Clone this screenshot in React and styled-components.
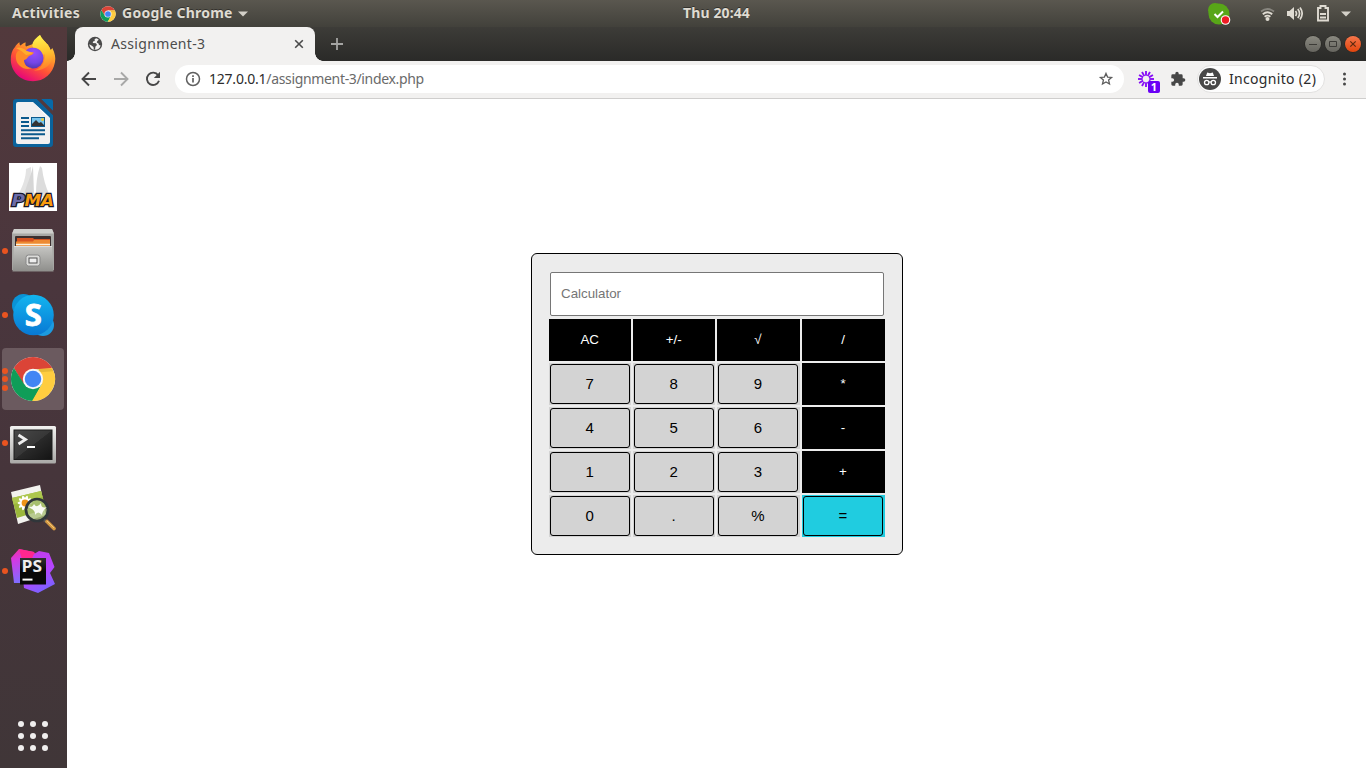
import React from "react";
import styled, { createGlobalStyle } from "styled-components";

const GlobalStyle = createGlobalStyle`
  * { box-sizing: border-box; }
  body { margin: 0; background: #fff; overflow: hidden; font-family: "Noto Sans", "Open Sans", sans-serif; }
  svg { display: block; flex: none; }
`;

const Desktop = styled.div`
  width: 1366px;
  height: 768px;
  display: flex;
  flex-direction: column;
`;

const TopBar = styled.header`
  height: 27px;
  flex: none;
  display: grid;
  grid-template-columns: 671px 79px 1fr;
  align-items: center;
  padding: 0 15px 0 12px;
  background: linear-gradient(#5a574f, #42413b);
  color: #dfdbd2;
  font-size: 14px;
  line-height: 24px;
  font-weight: 700;
  text-shadow: 0 -1px 0 rgba(0, 0, 0, 0.4);
`;

const BarGroup = styled.div`
  display: flex;
  align-items: center;
  justify-content: ${(p) => (p.$end ? "flex-end" : "flex-start")};
`;

const BarLabel = styled.span`
  width: ${(p) => p.$w}px;
  padding-bottom: 1px;
  letter-spacing: ${(p) => p.$ls || 0}px;
  white-space: nowrap;
`;

const Gap = styled.span`
  width: ${(p) => p.$w}px;
  flex: none;
`;

const Workspace = styled.div`
  flex: 1;
  display: flex;
  min-height: 0;
`;

const Dock = styled.nav`
  width: 67px;
  flex: none;
  display: flex;
  flex-direction: column;
  align-items: center;
  background: linear-gradient(#52393c, #4a363d 35%, #46353b 60%, #403638);
`;

const DockItem = styled.div`
  width: 62px;
  height: 62px;
  margin: 1px 3px 1px 2px;
  flex: none;
  display: flex;
  align-items: center;
  justify-content: center;
  position: relative;
  border-radius: 4px;
  background: ${(p) => (p.$active ? "#6b5a5f" : "transparent")};
`;

const RunningDots = styled.span`
  position: absolute;
  left: -0.3px;
  top: 0;
  height: 62px;
  display: flex;
  flex-direction: column;
  justify-content: center;
  gap: 2.5px;
`;

const Dot = styled.i`
  width: 6px;
  height: 6px;
  border-radius: 50%;
  background: #e95420;
`;

const AppsButton = styled.div`
  margin-top: auto;
  margin-right: 2px;
  height: 64px;
  display: grid;
  grid-template-columns: repeat(3, 6px);
  gap: 6px;
  align-content: center;
`;

const AppsDot = styled.i`
  width: 6px;
  height: 6px;
  border-radius: 50%;
  background: #f0eeee;
`;

const Browser = styled.main`
  flex: 1;
  display: flex;
  flex-direction: column;
  min-width: 0;
`;

const TabStrip = styled.div`
  height: 34px;
  flex: none;
  display: flex;
  align-items: center;
  padding: 0 5px 0 8px;
  background: linear-gradient(#3d3c38, #2a2a28);
`;

const Tab = styled.div`
  width: 240px;
  height: 34px;
  display: flex;
  align-items: center;
  padding: 0 11px 0 12px;
  background: #f2f1f0;
  border-radius: 8px 8px 0 0;
  position: relative;
  color: #4c4c4c;
  font-size: 14px;
  &::before, &::after {
    content: "";
    position: absolute;
    bottom: 0;
    width: 8px;
    height: 8px;
  }
  &::before {
    left: -8px;
    background: radial-gradient(circle at 0 0, transparent 7.5px, #f2f1f0 8px);
  }
  &::after {
    right: -8px;
    background: radial-gradient(circle at 100% 0, transparent 7.5px, #f2f1f0 8px);
  }
`;

const TabTitle = styled.span`
  flex: 1;
  margin-left: 8px;
  padding-bottom: 2px;
  letter-spacing: 0.33px;
`;

const WindowControls = styled.div`
  margin-left: auto;
  display: flex;
  gap: 4px;
`;

const WindowButton = styled.div`
  width: 16px;
  height: 16px;
  border-radius: 50%;
  background: ${(p) => (p.$close ? "linear-gradient(#f5764b, #e2450d)" : "linear-gradient(#8a8980, #66655f)")};
  box-shadow: 0 0 0 0.5px #23231f;
`;

const Toolbar = styled.div`
  height: 38px;
  flex: none;
  display: flex;
  align-items: center;
  padding: 0 12px 1px 14px;
  background: #f2f1f0;
  border-bottom: 1px solid #cfcecd;
`;

const AddressBar = styled.div`
  width: 949px;
  height: 28px;
  margin-left: 14px;
  border-radius: 14px;
  background: #fff;
  display: flex;
  align-items: center;
  padding: 0 10px;
  font-size: 14px;
  color: #6a6a6a;
`;

const Url = styled.span`
  flex: 1;
  margin-left: 8px;
  padding-bottom: 2px;
  letter-spacing: -0.34px;
  white-space: nowrap;
`;

const Host = styled.span`
  color: #2c2c2c;
  letter-spacing: -0.22px;
`;

const Profile = styled.div`
  width: 128px;
  height: 28px;
  margin: 0 12px 0 11px;
  border: 1px solid #e2e1e0;
  border-radius: 14px;
  background: #fdfdfd;
  display: flex;
  align-items: center;
  gap: 8px;
  padding-left: 1px;
  font-size: 14px;
  color: #2b2b2b;
  white-space: nowrap;
`;

const ProfileName = styled.span`
  padding-bottom: 2px;
  letter-spacing: 0.32px;
`;

const Extension = styled.div`
  position: relative;
  width: 22px;
  height: 22px;
  margin-left: 13px;
`;

const ExtensionBadge = styled.span`
  position: absolute;
  left: 11px;
  top: 13px;
  width: 12px;
  height: 12px;
  border-radius: 2px;
  background: #6a00f5;
  color: #fff;
  font: bold 11px/12px "Noto Sans", sans-serif;
  text-align: center;
`;

const Page = styled.section`
  flex: 1;
  background: #fff;
  padding: 154px 0 0 464px;
`;

const Calculator = styled.div`
  width: 372px;
  height: 302px;
  border: 1px solid #000;
  border-radius: 6px;
  background: #ececec;
  padding: 18px 17px 0;
  font-family: "Liberation Sans", Arial, sans-serif;
`;

const Display = styled.input`
  display: block;
  width: 334px;
  height: 44px;
  margin: 0 1px 3px;
  padding: 0 10px 2px;
  border: 1px solid #767676;
  border-radius: 2px;
  background: #fff;
  font: 13.3333px "Liberation Sans", Arial, sans-serif;
  &::placeholder { color: #757575; }
`;

const Keypad = styled.div`
  display: grid;
  grid-template-columns: 82px 82px 83px 83px;
  grid-auto-rows: 42px;
  gap: 2px;
`;

const KeyCell = styled.div`
  padding: 1px;
  background: ${(p) => ({ operator: "#000", equals: "#20cce0" }[p.$kind] || "#d3d3d3")};
`;

const Key = styled.button`
  display: block;
  width: 80px;
  height: 40px;
  padding: 0 0 2px;
  border: 1px solid #000;
  border-radius: 3px;
  background: ${(p) => ({ operator: "#000", equals: "#20cce0" }[p.$kind] || "#d3d3d3")};
  color: ${(p) => (p.$kind === "operator" ? "#fff" : "#000")};
  font: ${(p) => (p.$kind === "operator" ? "13.3333px" : "15px")} "Liberation Sans", Arial, sans-serif;
  ${KeyCell}:nth-child(4n + 1) &, ${KeyCell}:nth-child(4n + 2) & { padding-right: 0.6px; }
`;

const ChromeLogo = ({ size }) => (
  <svg width={size} height={size} viewBox="0 0 48 48">
    <circle cx="24" cy="24" r="23" fill="#fff" />
    <path d="M4.1 12.5A23 23 0 0 1 43.9 12.5L44 13.5H24L14 29.5Z" fill="#db4437" />
    <path d="M4.1 12.5A23 23 0 0 0 24 47L33.2 29.3 14.5 29Z" fill="#0f9d58" />
    <path d="M43.9 12.5A23 23 0 0 1 23 47L33.5 29 30 13.5Z" fill="#ffcd40" />
    <path d="M24 13.5H44.3L45 16 31 17Z" fill="#d2a52e" opacity=".5" />
    <circle cx="24" cy="24" r="10.6" fill="#f7f7f7" />
    <circle cx="24" cy="24" r="8.6" fill="#4285f4" />
  </svg>
);

const Caret = () => (
  <svg width="10" height="6" viewBox="0 0 10 6"><path d="M0 .5h10L5 5.500z" fill="#d3d0c8" /></svg>
);

const FirefoxIcon = () => (
  <svg width="48" height="48" viewBox="0 0 48 48">
    <defs>
      <linearGradient id="fxBody" x1=".85" y1="0" x2=".3" y2="1">
        <stop offset="0" stopColor="#fff44f" /><stop offset=".35" stopColor="#ffa22b" />
        <stop offset=".65" stopColor="#ff5136" /><stop offset="1" stopColor="#e5007f" />
      </linearGradient>
      <radialGradient id="fxGlobe" cx=".55" cy=".25" r=".8">
        <stop offset="0" stopColor="#9a4dff" /><stop offset=".6" stopColor="#7446e6" /><stop offset="1" stopColor="#4b35a8" />
      </radialGradient>
      <linearGradient id="fxTail" x1=".4" y1="0" x2=".5" y2="1">
        <stop offset="0" stopColor="#fff44f" /><stop offset=".5" stopColor="#ffc42e" /><stop offset="1" stopColor="#ff7a2a" />
      </linearGradient>
    </defs>
    <g transform="translate(0 -1)">
      <path d="M6 13C7 11 9 9 10.500 8.200 10.500 10 10.700 11 11.500 11.500 13 10 15 8.500 16.800 8.500 16.300 10 16.300 11.500 17 12.500L24 10 31 1C33 5 36 7 38 10 39 10 39.500 11 39.500 12 41 13 41 15 41.500 16 43 15 43 14 43.300 14 46 19 46.800 24 46 28 44 40 35 47.200 24 47.200 11 47.200 2 37 1.800 26 1.600 21 3 16 6 13Z" fill="url(#fxBody)" />
      <circle cx="24" cy="24" r="10.500" fill="url(#fxGlobe)" />
      <path d="M31 1C25 5 22 10 24 13.500 30 14 33 17 34 21 35 20 35.500 20 36 21 36 30 31 35 25 36.500 36 37 44 30 44 20 42 17 41.500 16 39.500 12 37 8 33 6 31 1Z" fill="url(#fxTail)" />
      <path d="M9 17C12 15 16 16 19 18L25 18.500C24 21 20 21.500 19 23 18 25 16 26 15 26 15 31 19 34 23 34 16 37 8 32 7 25 6.500 21 7 19 9 17Z" fill="#ff8a28" />
      <path d="M7 14Q12 12 18 17l6 2q-4 2-7 2-5-5-10-7Z" fill="#ffad2c" />
    </g>
  </svg>
);

const WriterIcon = () => (
  <svg width="48" height="48" viewBox="0 0 48 48">
    <path d="M7 0H28L44 16V45q0 3-3 3H7q-3 0-3-3V3q0-3 3-3Z" fill="#0a639c" />
    <path d="M32 0H41q3 0 3 3V12Z" fill="#076aa8" />
    <path d="M28 0H32L44 12V16Z" fill="#52393d" />
    <path d="M9 3H24L41 19V43q0 2-2 2H9q-2 0-2-2V5q0-2 2-2Z" fill="#f1f1f1" />
    <path d="M24 3 41 19 36 16Z" fill="#fff" />
    <path d="M12 19h8M12 23h8M12 27h8M12 31.200h24M12 35.200h24M12 39.200h18" stroke="#0b5a8c" strokeWidth="2" />
    <rect x="22" y="18" width="14" height="10" fill="#0b5a8c" />
    <rect x="23" y="19" width="12" height="8" fill="#79c5ec" />
    <path d="M23 27V25l4-4 3 3 2-1 3 3v1Z" fill="#343434" />
    <circle cx="33.500" cy="20.500" r="1.500" fill="#e8c83c" />
  </svg>
);

const PmaIcon = () => (
  <svg width="48" height="48" viewBox="0 0 48 48">
    <rect width="48" height="48" fill="#fff" />
    <path d="M17 6 22 4C22 14 21 24 20 32H9C14 23 17 14 17 6Z" fill="#e3e3e3" />
    <path d="M24 3 25 32 15 31C18 22 22 12 24 3Z" fill="#d6d6d6" />
    <path d="M31 3 33 5C34 15 37 24 40 31H27C27 21 28 12 31 3Z" fill="#dcdcdc" />
    <path d="M9 32q14-4 32-1l-4 3H13Z" fill="#e5e5e5" />
    <text x="2.500" y="43" fontFamily="DejaVu Sans" fontWeight="bold" fontStyle="italic" fontSize="15.500" textLength="13.500" lengthAdjust="spacingAndGlyphs" fill="#6c6ca8" stroke="#17172a" strokeWidth="2.400" paintOrder="stroke">P</text>
    <text x="15.500" y="43" fontFamily="DejaVu Sans" fontWeight="bold" fontStyle="italic" fontSize="15.500" textLength="29.500" lengthAdjust="spacingAndGlyphs" fill="#f89c0e" stroke="#17172a" strokeWidth="2.400" paintOrder="stroke">MA</text>
  </svg>
);

const FilesIcon = () => (
  <svg width="48" height="48" viewBox="0 0 48 48">
    <defs>
      <linearGradient id="drawer" x1="0" y1="0" x2="0" y2="1"><stop offset="0" stopColor="#c6c6c3" /><stop offset="1" stopColor="#8e8e8b" /></linearGradient>
    </defs>
    <path d="M5 2H43L45 7V43H3V7Z" fill="#a8a8a5" />
    <path d="M5 2H43L45 6.500H3Z" fill="#cfcfcc" />
    <rect x="6" y="9" width="36" height="12" rx="1" fill="#3c3030" />
    <path d="M8 11H24l1 1H41V20H8Z" fill="#d65320" />
    <path d="M7 14.500H24l1-1.500H41V20H7Z" fill="#ed8a32" />
    <path d="M7 17.500h34" stroke="#fff2dc" strokeWidth="1.500" />
    <path d="M5 19H43L44.500 44.500H3.500Z" fill="url(#drawer)" />
    <path d="M5 19.500H43" stroke="#ddd" />
    <rect x="17" y="28" width="14" height="11" rx="2.500" fill="#dcdcda" stroke="#888" />
    <rect x="20" y="31" width="8" height="5" fill="#eee" stroke="#525252" />
  </svg>
);

const SkypeIcon = () => (
  <svg width="48" height="48" viewBox="0 0 48 48">
    <defs><linearGradient id="skype" x1="0" y1="0" x2="0" y2="1"><stop offset="0" stopColor="#12b5ef" /><stop offset="1" stopColor="#0878d4" /></linearGradient></defs>
    <circle cx="14.500" cy="14.500" r="11.500" fill="#0a93d6" /><circle cx="34" cy="34" r="11" fill="#1c9be0" />
    <circle cx="24.500" cy="24" r="20.300" fill="url(#skype)" />
    <text x="24.300" y="35.300" textAnchor="middle" fontFamily="Open Sans" fontWeight="bold" fontSize="31" fill="#fff" stroke="#fff" strokeWidth=".8">S</text>
  </svg>
);

const TerminalIcon = () => (
  <svg width="48" height="48" viewBox="0 0 48 48">
    <defs>
      <linearGradient id="screen" x1="0" y1="0" x2="1" y2="1"><stop offset="0" stopColor="#484848" /><stop offset=".5" stopColor="#373737" /><stop offset=".51" stopColor="#2a2a2a" /><stop offset="1" stopColor="#141414" /></linearGradient>
      <linearGradient id="bezel" x1="0" y1="0" x2="0" y2="1"><stop offset="0" stopColor="#f2f2f0" /><stop offset="1" stopColor="#a9a9a7" /></linearGradient>
    </defs>
    <rect x="1" y="7" width="46" height="37.500" rx="1.500" fill="url(#bezel)" />
    <rect x="4.500" y="10.500" width="39" height="30.500" fill="#1c1c1c" />
    <rect x="5.500" y="11.500" width="37" height="28.500" fill="url(#screen)" />
    <path d="m9.500 16 7 4.500-7 4.500" fill="none" stroke="#eee" strokeWidth="2.800" />
    <path d="M18 28h8" stroke="#fff" strokeWidth="2" />
  </svg>
);

const ImageViewerIcon = () => (
  <svg width="48" height="48" viewBox="0 0 48 48">
    <path d="M2 9 31 2 37 32 9 41Z" fill="#f3f3ef" />
    <path d="M3 15 32 8 37 26 8 35Z" fill="#9bb83c" />
    <path d="M3 15 32 8l1.500 6L4.500 21Z" fill="#adc74d" />
    <g transform="translate(16 20)" fill="#fff">
      {[0, 36, 72, 108, 144].map((a) => <ellipse key={a} rx="7.500" ry="2.100" transform={`rotate(${a})`} />)}
      <circle r="3.400" fill="#ee9418" />
    </g>
    <circle cx="28" cy="27" r="11" fill="#aac079" fillOpacity=".8" stroke="#30363a" strokeWidth="2.700" />
    <path d="M19 24q4 1 6-3 3 5 7-1 0 6 6 4-5 4-5 8-4-5-7 0 1-5-7-8Z" fill="#fff" opacity=".92" />
    <path d="m35 37 3 2" stroke="#555" strokeWidth="3" />
    <path d="m38 38.500 7 7" stroke="#d49942" strokeWidth="3.600" strokeLinecap="round" />
    <path d="m38 38 7 7" stroke="#f0c477" strokeWidth="1" />
  </svg>
);

const PhpStormIcon = () => (
  <svg width="48" height="48" viewBox="0 0 48 48">
    <defs>
      <linearGradient id="psA" x1="0" y1="0" x2=".2" y2="1"><stop offset="0" stopColor="#f52d9b" /><stop offset=".35" stopColor="#d23ae4" /><stop offset="1" stopColor="#806dff" /></linearGradient>
      <linearGradient id="psB" x1=".2" y1="0" x2=".6" y2="1"><stop offset="0" stopColor="#c13be6" /><stop offset=".55" stopColor="#b844ff" /><stop offset="1" stopColor="#7763ff" /></linearGradient>
      <linearGradient id="psC" x1="0" y1="0" x2="0" y2="1"><stop offset="0" stopColor="#303030" /><stop offset=".5" stopColor="#080808" /></linearGradient>
    </defs>
    <path d="M10 2 25 5 20 13 13 36 5 36 2 11Z" fill="url(#psA)" />
    <path d="M10 2 25 5 29 11 13 12Z" fill="#ff278f" />
    <path d="M25 7 30 4 40 6 45.500 20 41 26 46 37 29 46 15 41 14 32Z" fill="url(#psB)" />
    <rect x="11" y="11" width="26" height="26.500" fill="url(#psC)" />
    <text x="12.500" y="25.400" fontFamily="Open Sans" fontWeight="bold" fontSize="15.500" textLength="20.500" lengthAdjust="spacingAndGlyphs" fill="#eee">PS</text>
    <path d="M13.500 32.600h10" stroke="#fff" strokeWidth="2" />
  </svg>
);

const DOCK = [
  { name: "Firefox", Icon: FirefoxIcon, windows: 0 },
  { name: "Writer", Icon: WriterIcon, windows: 0 },
  { name: "phpMyAdmin", Icon: PmaIcon, windows: 0 },
  { name: "Files", Icon: FilesIcon, windows: 1 },
  { name: "Skype", Icon: SkypeIcon, windows: 1 },
  { name: "Chrome", Icon: () => <ChromeLogo size={46} />, windows: 3, active: true },
  { name: "Terminal", Icon: TerminalIcon, windows: 1 },
  { name: "Image Viewer", Icon: ImageViewerIcon, windows: 0 },
  { name: "PhpStorm", Icon: PhpStormIcon, windows: 1 },
];

const KEYS = [
  ["AC", "operator"], ["+/-", "operator"], ["√", "operator"], ["/", "operator"],
  ["7"], ["8"], ["9"], ["*", "operator"],
  ["4"], ["5"], ["6"], ["-", "operator"],
  ["1"], ["2"], ["3"], ["+", "operator"],
  ["0"], ["."], ["%"], ["=", "equals"],
];

const SystemTray = () => (
  <BarGroup $end>
    <svg width="23" height="24" viewBox="0 0 23 24">
      <circle cx="7" cy="8" r="7" fill="#58a618" /><circle cx="11" cy="12" r="10.500" fill="#58a618" />
      <path d="m6.500 12 3 3 5.500-5.500" fill="none" stroke="#fff" strokeWidth="2" />
      <circle cx="17.500" cy="18" r="4.800" fill="#fff" /><circle cx="17.500" cy="18" r="3.700" fill="#ee1c24" />
    </svg>
    <Gap $w={29} />
    <svg width="15" height="16" viewBox="0 0 15 16" fill="none" strokeWidth="1.800">
      <path d="M1 5.500q6.500-5 13 0" stroke="#88867f" />
      <path d="M2.800 8.300q4.700-4 9.400 0M4.600 10.800q2.900-2.300 5.800 0" stroke="#dfdbd2" />
      <circle cx="7.500" cy="13" r="2" fill="#dfdbd2" />
    </svg>
    <Gap $w={12} />
    <svg width="16" height="15" viewBox="0 0 16 15" fill="none" stroke="#dfdbd2" strokeWidth="1.700">
      <path d="M0 5h2.500L7 1v13L2.500 10H0Z" fill="#dfdbd2" stroke="none" />
      <path d="M8.500 5q2 2.500 0 5M10.800 3q3.500 4.500 0 9M13 1.500q4.300 6 0 12" />
    </svg>
    <Gap $w={14} />
    <svg width="12" height="17" viewBox="0 0 12 17">
      <path d="M1 3h2.500V1h5v2H11v12.500H1Z" fill="none" stroke="#dfdbd2" strokeWidth="1.900" />
      <path d="M3 9h6M3 12.500h6" stroke="#dfdbd2" strokeWidth="2" />
    </svg>
    <Gap $w={12} />
    <Caret />
  </BarGroup>
);

export default function App() {
  return (
    <Desktop>
      <GlobalStyle />
      <TopBar>
        <BarGroup>
          <BarLabel $w={88} $ls={0.3}>Activities</BarLabel>
          <ChromeLogo size={16} />
          <Gap $w={6} />
          <BarLabel $w={116} $ls={0.25}>Google Chrome</BarLabel>
          <Caret />
        </BarGroup>
        <BarLabel $w={67} $ls={0.12}>Thu 20:44</BarLabel>
        <SystemTray />
      </TopBar>
      <Workspace>
        <Dock>
          {DOCK.map(({ name, Icon, windows, active }) => (
            <DockItem key={name} $active={active}>
              <RunningDots>{Array.from({ length: windows }, (_, i) => <Dot key={i} />)}</RunningDots>
              <Icon />
            </DockItem>
          ))}
          <AppsButton>{Array.from({ length: 9 }, (_, i) => <AppsDot key={i} />)}</AppsButton>
        </Dock>
        <Browser>
          <TabStrip>
            <Tab>
              <svg width="16" height="16" viewBox="0 0 16 16">
                <circle cx="8" cy="8" r="7.200" fill="#4a4a4a" />
                <path d="M9 2.300 7.500 3.500 7.800 5 6 5.500 5.800 7 9 7.300 10 9 8.500 10.500 8 13.500 6.800 13.300 6.500 11 4.500 9.500 2.300 8.300A5.800 5.800 0 0 0 8 13.800 5.800 5.800 0 0 0 13.600 9.500L12 9 11.500 7.500 9.800 6.500 10.300 5 11.800 3.700A6 6 0 0 0 9 2.300Z" fill="#f2f1f0" />
              </svg>
              <TabTitle>Assignment-3</TabTitle>
              <svg width="10" height="10" viewBox="0 0 10 10"><path d="m1.200 1.200 7.600 7.600m0-7.600-7.600 7.600" stroke="#4a4a4a" strokeWidth="1.600" /></svg>
            </Tab>
            <Gap $w={16} />
            <svg width="12" height="12" viewBox="0 0 12 12"><path d="M6 0v12M0 6h12" stroke="#a5a5a3" strokeWidth="1.800" /></svg>
            <WindowControls>
              <WindowButton><svg width="16" height="16"><path d="M4 8.500h8" stroke="#3c3b37" /></svg></WindowButton>
              <WindowButton><svg width="16" height="16"><path d="M4.500 5.500h7v5h-7z" fill="none" stroke="#3c3b37" /></svg></WindowButton>
              <WindowButton $close><svg width="16" height="16"><path d="m5.300 5.300 5.400 5.400m0-5.400-5.400 5.400" stroke="#5c2a10" strokeWidth="1.200" /></svg></WindowButton>
            </WindowControls>
          </TabStrip>
          <Toolbar>
            <svg width="16" height="16" viewBox="0 0 16 16" fill="none" stroke="#474747" strokeWidth="1.900"><path d="M15 8H2M8 1.500 1.500 8 8 14.500" /></svg>
            <Gap $w={16} />
            <svg width="16" height="16" viewBox="0 0 16 16" fill="none" stroke="#a8a8a7" strokeWidth="1.900"><path d="M1 8h13M8 1.500 14.500 8 8 14.500" /></svg>
            <Gap $w={16} />
            <svg width="16" height="16" viewBox="0 0 16 16"><path d="M13.200 4.200A6.200 6.200 0 1 0 14 9.800" fill="none" stroke="#474747" strokeWidth="1.900" /><path d="M15 .8V7H8.800Z" fill="#474747" /></svg>
            <AddressBar>
              <svg width="16" height="16" viewBox="0 0 16 16" fill="none" stroke="#606060" strokeWidth="1.500"><circle cx="8" cy="8" r="6.500" /><path d="M8 7v4.500M8 4.200v1.700" strokeWidth="1.700" /></svg>
              <Url><Host>127.0.0.1</Host>/assignment-3/index.php</Url>
              <svg width="16" height="16" viewBox="0 0 16 16"><path d="m8 2.400 1.600 3.700 4 .35-3 2.650.9 3.900L8 10.950 4.500 13l.9-3.900-3-2.650 4-.35Z" fill="none" stroke="#5c5c5c" strokeWidth="1.300" /></svg>
            </AddressBar>
            <Extension>
              <svg width="18" height="22" viewBox="0 0 18 22" stroke="#8710f5" strokeWidth="1.900">
                {Array.from({ length: 12 }, (_, i) => <path key={i} d="M9 3v4.700" transform={`rotate(${i * 30} 9 11)`} />)}
              </svg>
              <ExtensionBadge>1</ExtensionBadge>
            </Extension>
            <Gap $w={11} />
            <svg width="16" height="16" viewBox="0 0 24 24" fill="#474747"><path d="M20.500 11H19V7a2 2 0 0 0-2-2h-4V3.500a2.500 2.500 0 0 0-5 0V5H4a2 2 0 0 0-2 2v3.800h1.500a2.700 2.700 0 0 1 0 5.400H2V20a2 2 0 0 0 2 2h3.800v-1.500a2.700 2.700 0 0 1 5.400 0V22H17a2 2 0 0 0 2-2v-4h1.500a2.500 2.500 0 0 0 0-5Z" /></svg>
            <Profile>
              <svg width="22" height="22" viewBox="0 0 22 22">
                <circle cx="11" cy="11" r="11" fill="#484848" />
                <path d="M7 8 8.200 4.500 11 5.200 13.800 4.500 15 8ZM4 9h14v1.500H4Z" fill="#fff" />
                <g fill="none" stroke="#fff" strokeWidth="1.300"><circle cx="7.700" cy="14.500" r="2.200" /><circle cx="14.300" cy="14.500" r="2.200" /><path d="M10 14.300q1-.8 2 0" /></g>
              </svg>
              <ProfileName>Incognito (2)</ProfileName>
            </Profile>
            <svg width="14" height="16" viewBox="0 0 14 16" fill="#474747"><circle cx="7.500" cy="3" r="1.500" /><circle cx="7.500" cy="8" r="1.500" /><circle cx="7.500" cy="13" r="1.500" /></svg>
          </Toolbar>
          <Page>
            <Calculator>
              <Display placeholder="Calculator" />
              <Keypad>
                {KEYS.map(([label, kind]) => (
                  <KeyCell key={label} $kind={kind}><Key $kind={kind}>{label}</Key></KeyCell>
                ))}
              </Keypad>
            </Calculator>
          </Page>
        </Browser>
      </Workspace>
    </Desktop>
  );
}
